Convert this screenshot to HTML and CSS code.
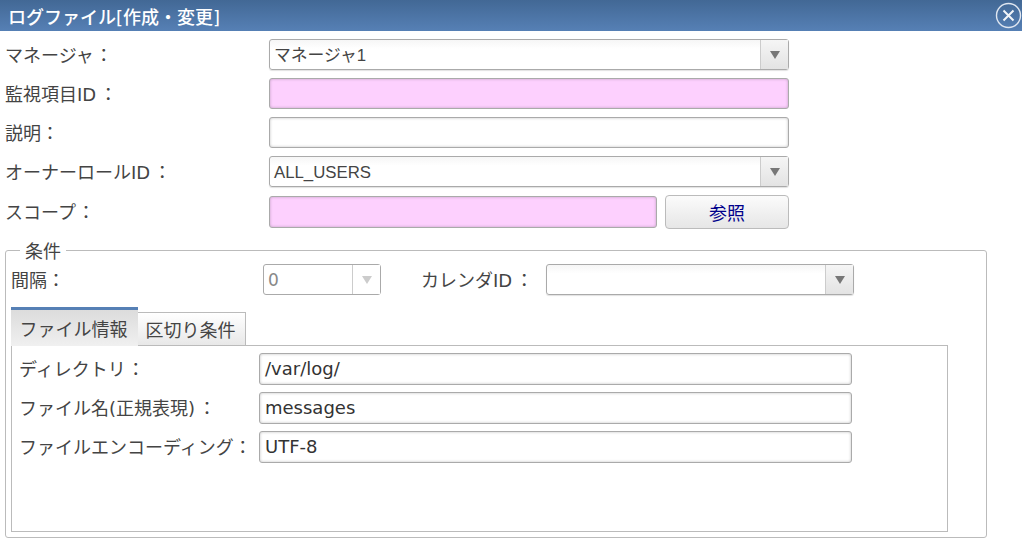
FILE: index.html
```html
<!DOCTYPE html>
<html lang="ja">
<head>
<meta charset="utf-8">
<title>ログファイル[作成・変更]</title>
<link rel="stylesheet" href="styles.css">
</head>
<body>
<header class="titlebar">
  <span class="title">ログファイル[作成・変更]</span>
  <svg class="close" width="27" height="27" viewBox="0 0 27 27" aria-hidden="true">
    <circle cx="13.5" cy="13.5" r="12" fill="none" stroke="#dfe6f0" stroke-width="1.4"/>
    <path d="M8.5 8.5 18.5 18.5M18.5 8.5 8.5 18.5" fill="none" stroke="#f2f5f9" stroke-width="2"/>
  </svg>
</header>
<main class="form">
  <div class="row">
    <span class="label">マネージャ<span class="sep-k">：</span></span>
    <div class="combo wide"><span class="value">マネージャ1</span><span class="arrow"><i class="tri"></i></span></div>
  </div>
  <div class="row">
    <span class="label">監視項目ID<span class="sep">：</span></span>
    <div class="field wide pink"></div>
  </div>
  <div class="row">
    <span class="label">説明：</span>
    <div class="field wide"></div>
  </div>
  <div class="row">
    <span class="label">オーナーロールID<span class="sep">：</span></span>
    <div class="combo wide"><span class="value latin">ALL_USERS</span><span class="arrow"><i class="tri"></i></span></div>
  </div>
  <div class="row scope-row">
    <span class="label">スコープ<span class="sep-k">：</span></span>
    <div class="field scope pink"></div>
    <button class="btn" type="button">参照</button>
  </div>
  <fieldset class="group">
    <legend class="legend">条件</legend>
    <div class="cond">
      <span class="cond-label">間隔：</span>
      <div class="combo spin disabled"><span class="value">0</span><span class="arrow"><i class="tri"></i></span></div>
      <span class="cal-label">カレンダID<span class="sep">：</span></span>
      <div class="combo cal"><span class="value"></span><span class="arrow"><i class="tri"></i></span></div>
    </div>
    <div class="tabs">
      <div class="tab active">ファイル情報</div>
      <div class="tab">区切り条件</div>
    </div>
    <section class="panel">
      <div class="prow"><span class="plabel">ディレクトリ<span class="sep-k">：</span></span><div class="field pfield">/var/log/</div></div>
      <div class="prow"><span class="plabel">ファイル名(正規表現)<span class="sep">：</span></span><div class="field pfield">messages</div></div>
      <div class="prow"><span class="plabel">ファイルエンコーディング：</span><div class="field pfield">UTF-8</div></div>
    </section>
  </fieldset>
</main>
</body>
</html>
```
FILE: styles.css
```css
* { box-sizing: border-box; }
html, body { margin: 0; padding: 0; }
body {
  width: 1022px;
  height: 547px;
  overflow: hidden;
  background: #fff;
  color: #444;
  font-family: "DejaVu Sans", "Noto Sans CJK JP", sans-serif;
  font-size: 18px;
}
.titlebar {
  height: 31px;
  background: linear-gradient(#426895, #5680b5);
  display: flex;
  align-items: center;
  justify-content: space-between;
  padding: 0 0 0 8px;
}
.title { color: #fff; font-size: 18px; font-weight: 500; }
.close { margin-top: -1px; }
.form { padding: 8px 0 0 5px; }
.row { display: flex; align-items: center; height: 31px; margin-bottom: 8px; }
.label { width: 264px; flex: none; padding-bottom: 2px; }
.sep { margin-left: 3px; }
.sep-k { margin-left: 1px; }
.wide { width: 520px; }
.combo, .field {
  height: 31px;
  border: 1px solid #aaa;
  border-radius: 3px;
  background: #fff;
  color: #444;
}
.combo {
  display: flex;
  align-items: center;
  background: linear-gradient(#f6f6f6, #fff 30%);
  box-shadow: 0 1px 1px rgba(0,0,0,.12);
}
.combo .value { flex: 1; padding-left: 4px; padding-bottom: 2px; font-family: "Liberation Sans", "Noto Sans CJK JP", sans-serif; font-size: 16.8px; }
.combo .latin { padding-bottom: 0; padding-top: 2px; }
.arrow {
  flex: none;
  width: 28px;
  height: 100%;
  border-left: 1px solid #ccc;
  background: linear-gradient(#f5f5f5, #e3e3e3);
  display: flex;
  align-items: center;
  justify-content: center;
}
.tri { width: 0; height: 0; border: 5px solid transparent; border-top: 8px solid #777; border-bottom: 0; }
.field { box-shadow: inset 0 0 3px rgba(0,0,0,.25); }
.pink { background: #fdd0fe; }
.scope-row { height: 34px; margin-bottom: 0; }
.scope { width: 388px; height: 32px; }
.btn {
  width: 124px;
  height: 34px;
  margin-left: 8px;
  padding: 0;
  border: 1px solid #bbb;
  border-radius: 4px;
  background: linear-gradient(#fbfbfb, #e6e6e6);
  color: #00008b;
  font: inherit;
}
.group {
  margin: 8px 0 0 0;
  padding: 0 5px;
  width: 982px;
  height: 301px;
  border: 1px solid #bbb;
  border-radius: 3px;
}
.legend { margin-left: 9px; padding: 4px 5px 0; line-height: 22px; }
.cond { display: flex; align-items: center; height: 31px; margin-top: 1px; }
.cond-label { width: 252px; flex: none; padding-bottom: 2px; }
.spin { width: 118px; border-color: #aaa; }
.disabled { background: #fff; box-shadow: none; color: #888; }
.disabled .value { color: #888; font-family: "DejaVu Sans", sans-serif; font-size: 17px; padding-bottom: 0; }
.disabled .arrow { background: #fff; }
.disabled .tri { border-top-color: #ccc; }
.cal-label { width: 125px; margin-left: 40px; flex: none; padding-bottom: 2px; white-space: nowrap; }
.cal { width: 308px; }
.tabs { position: relative; z-index: 1; display: flex; align-items: flex-end; margin-top: 12px; height: 39px; }
.tab {
  height: 34px;
  width: 108px;
  line-height: 35px;
  padding-right: 2px;
  border: 1px solid #bbb;
  border-left: 0;
  background: linear-gradient(#fff, #e8e8e8);
  text-align: center;
  white-space: nowrap;
}
.tab.active {
  width: 127px;
  height: 39px;
  line-height: 40px;
  border: 0;
  border-top: 3px solid #5680b5;
  background: linear-gradient(#dcdcdc, #f0f0f0);
}
.panel {
  width: 937px;
  height: 187px;
  margin-top: -1px;
  padding: 7px 0 0 7px;
  border: 1px solid #bbb;
  background: #fff;
}
.prow { display: flex; align-items: center; height: 32px; margin-bottom: 7px; }
.plabel { width: 240px; flex: none; white-space: nowrap; padding-bottom: 2px; }
.pfield { width: 593px; height: 32px; padding: 0 5px; line-height: 29px; border-color: #aaa; color: #333; }
```
